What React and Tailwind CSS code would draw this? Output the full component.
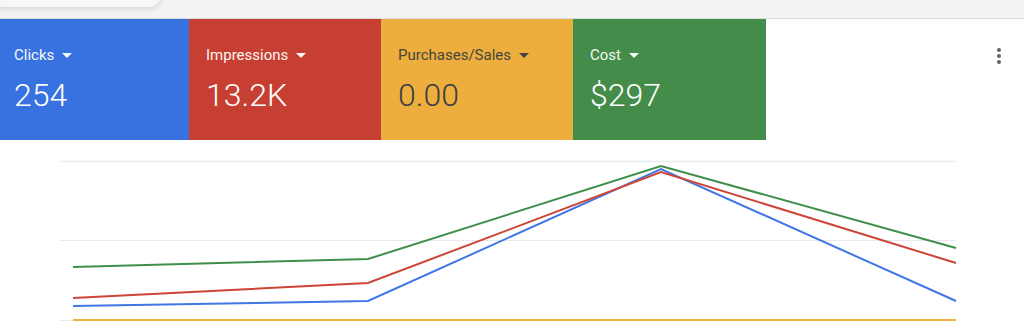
const tiles = [
  { label: "Clicks", value: "254", cls: "w-[189px] pl-[14px] bg-[#3871e0] text-white" },
  { label: "Impressions", value: "13.2K", cls: "w-[192px] pl-[17px] bg-[#c73f32] text-white" },
  { label: "Purchases/Sales", value: "0.00", cls: "w-[192px] pl-[17px] bg-[#edae3d] text-[#3c4043]" },
  { label: "Cost", value: "$297", cls: "w-[193px] pl-[17px] bg-[#438c49] text-white" },
];

const xs = [73, 368, 661, 956];
const series = [
  { color: "#f0b142", ys: [180, 180, 180, 180] },
  { color: "#4076e6", ys: [166, 161, 29, 161] },
  { color: "#cd4536", ys: [158, 143, 32, 123] },
  { color: "#3f8f4a", ys: [127, 119, 26, 108] },
];

function Caret() {
  return (
    <svg width="10" height="5" viewBox="0 0 10 5" className="ml-2 fill-current">
      <path d="M0 0h10L5 5z" />
    </svg>
  );
}

function Tile({ label, value, cls }) {
  return (
    <div className={`h-[121px] pt-[26px] ${cls}`}>
      <div className="flex items-center text-[15px] leading-5 opacity-95">
        {label}
        <Caret />
      </div>
      <div className="mt-[10px] text-[32px] leading-10 font-light">{value}</div>
    </div>
  );
}

export default function App() {
  return (
    <div className="w-[1024px] h-[322px] bg-white overflow-hidden font-['Roboto',sans-serif]">
      <div className="relative h-[19px] bg-[#f1f3f4] border-b border-[#dadce0]">
        <div className="absolute left-[-10px] top-[-20px] w-[172px] h-[27px] rounded-full bg-[#f6f7f8] shadow-[0_2px_6px_rgba(0,0,0,0.12)]" />
      </div>
      <div className="flex">
        <div className="flex">
          {tiles.map((t) => (
            <Tile key={t.label} {...t} />
          ))}
        </div>
        <div className="flex-1 flex justify-end pr-[23px] pt-[29px]">
          <div className="flex flex-col gap-[2px]">
            <span className="block w-1 h-1 rounded-full bg-[#5f6368]" />
            <span className="block w-1 h-1 rounded-full bg-[#5f6368]" />
            <span className="block w-1 h-1 rounded-full bg-[#5f6368]" />
          </div>
        </div>
      </div>
      <svg width="1024" height="182" viewBox="0 0 1024 182" className="block">
        <line x1="60" y1="21.5" x2="956" y2="21.5" stroke="#e8eaed" strokeWidth="1.5" />
        <line x1="60" y1="100.5" x2="956" y2="100.5" stroke="#e8eaed" strokeWidth="1" />
        <line x1="60" y1="180.5" x2="956" y2="180.5" stroke="#e8eaed" strokeWidth="1" />
        {series.map((s) => (
          <polyline
            key={s.color}
            points={xs.map((x, i) => `${x},${s.ys[i]}`).join(" ")}
            fill="none"
            stroke={s.color}
            strokeWidth="2"
          />
        ))}
      </svg>
    </div>
  );
}
